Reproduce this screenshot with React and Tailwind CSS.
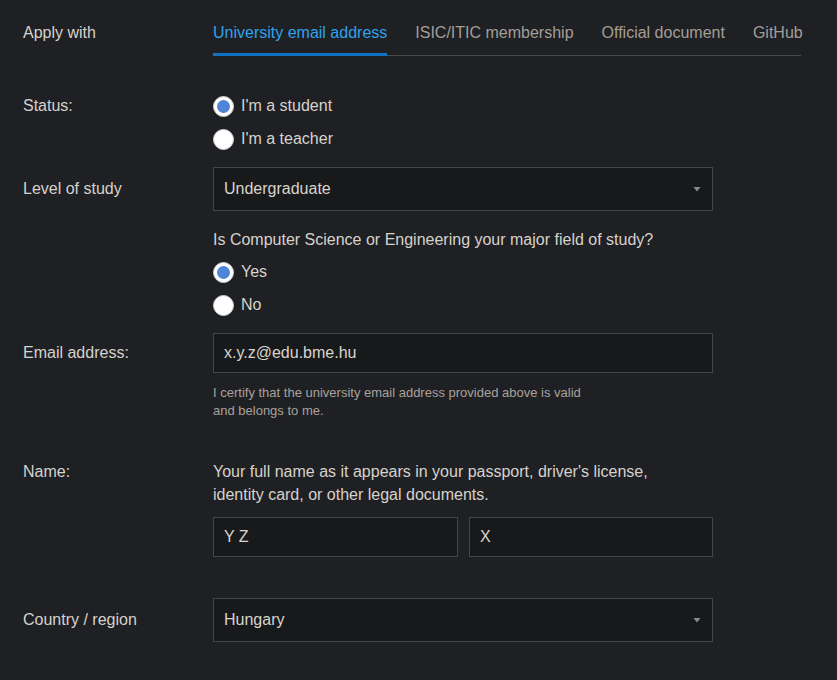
import { useState } from 'react'

const tabs = ['University email address', 'ISIC/ITIC membership', 'Official document', 'GitHub']

function Radio({ checked, label, onClick }) {
  return (
    <label className="flex h-6 items-center cursor-pointer" onClick={onClick}>
      <span className="flex h-[21px] w-[21px] items-center justify-center rounded-full border border-[#cfcfcf] bg-white">
        {checked && <span className="h-[13px] w-[13px] rounded-full bg-[#4f84d9]" />}
      </span>
      <span className="ml-[7px] leading-6">{label}</span>
    </label>
  )
}

function Select({ value }) {
  return (
    <div className="flex h-11 w-full items-center justify-between border border-[#434548] bg-[#18191b] pl-[10px] pr-[11px] text-[#d8d4ce]">
      <span>{value}</span>
      <svg width="8" height="6" viewBox="0 0 8 6">
        <path d="M0.5 1 L7.5 1 L4 5.5 Z" fill="#8a8a8a" />
      </svg>
    </div>
  )
}

function TextInput({ value }) {
  return (
    <div className="flex h-10 w-full items-center border border-[#434548] bg-[#18191b] pl-[10px] text-[#d8d4ce]">
      {value}
    </div>
  )
}

export default function App() {
  const [tab, setTab] = useState(0)
  const [status, setStatus] = useState('student')
  const [major, setMajor] = useState('yes')

  return (
    <div className="min-h-screen bg-[#1f2023] pl-[23px] text-[16px] text-[#d6d2cc] font-['Liberation_Sans',Arial,sans-serif]">
      <div className="flex">
        <div className="w-[190px] pt-[23px] leading-5">Apply with</div>
        <div className="flex w-[588px] gap-7 border-b border-[#4a4a4a] pt-[23px]">
          {tabs.map((t, i) => (
            <button
              key={t}
              onClick={() => setTab(i)}
              className={
                'whitespace-nowrap border-b-[3px] pb-[10px] leading-5 -mb-px ' +
                (i === tab ? 'border-[#1270c1] text-[#2fa2ec]' : 'border-transparent text-[#a39e98]')
              }
            >
              {t}
            </button>
          ))}
        </div>
      </div>

      <div className="mt-[38px] flex">
        <div className="w-[190px] leading-6">Status:</div>
        <div className="flex flex-col gap-[9px]">
          <Radio checked={status === 'student'} label="I'm a student" onClick={() => setStatus('student')} />
          <Radio checked={status === 'teacher'} label="I'm a teacher" onClick={() => setStatus('teacher')} />
        </div>
      </div>

      <div className="mt-4 flex">
        <div className="w-[190px] leading-[44px]">Level of study</div>
        <div className="w-[500px]">
          <Select value="Undergraduate" />
          <div className="mt-[17px] leading-6">Is Computer Science or Engineering your major field of study?</div>
          <div className="mt-2 flex flex-col gap-[9px]">
            <Radio checked={major === 'yes'} label="Yes" onClick={() => setMajor('yes')} />
            <Radio checked={major === 'no'} label="No" onClick={() => setMajor('no')} />
          </div>
        </div>
      </div>

      <div className="mt-4 flex">
        <div className="w-[190px] leading-10">Email address:</div>
        <div className="w-[500px]">
          <TextInput value="x.y.z@edu.bme.hu" />
          <p className="mt-[11px] text-[13px] leading-[18px] text-[#a8a29c]">
            I certify that the university email address provided above is valid
            <br />
            and belongs to me.
          </p>
        </div>
      </div>

      <div className="mt-[40px] flex">
        <div className="w-[190px] leading-[23px]">Name:</div>
        <div className="w-[500px]">
          <p className="leading-[23px]">
            Your full name as it appears in your passport, driver's license,
            <br />
            identity card, or other legal documents.
          </p>
          <div className="mt-[11px] grid grid-cols-[245px_1fr] gap-[11px]">
            <TextInput value="Y Z" />
            <TextInput value="X" />
          </div>
        </div>
      </div>

      <div className="mt-[41px] flex pb-10">
        <div className="w-[190px] leading-[44px]">Country / region</div>
        <div className="w-[500px]">
          <Select value="Hungary" />
        </div>
      </div>
    </div>
  )
}
